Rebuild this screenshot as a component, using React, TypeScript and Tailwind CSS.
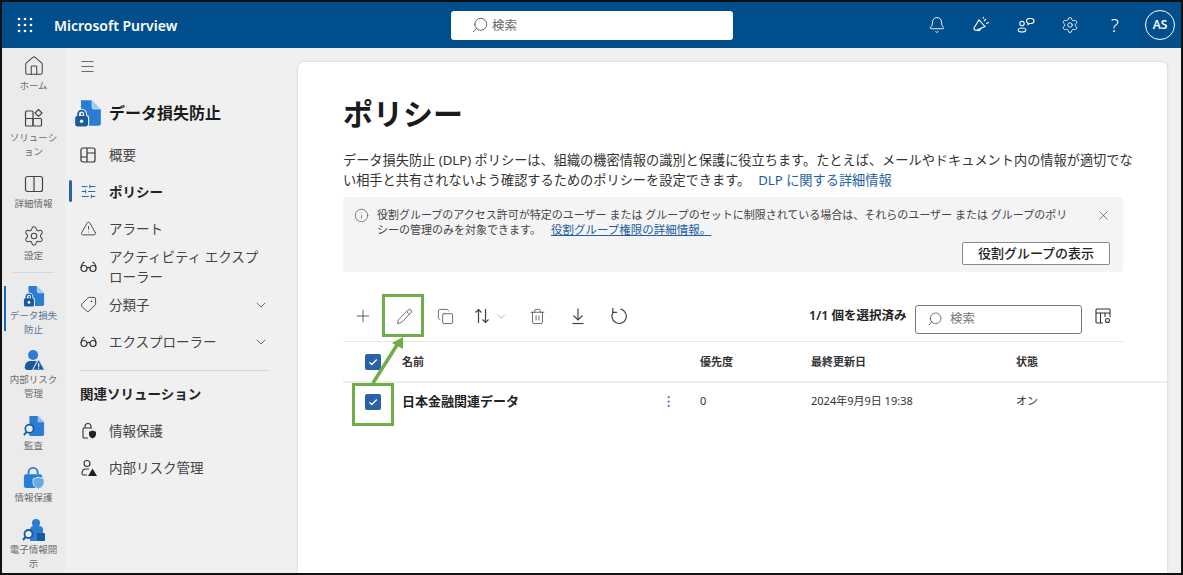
import { ReactNode } from "react"
import {
  Bell,
  ChevronDown,
  Copy,
  EllipsisVertical,
  Home,
  Info,
  Menu,
  Pencil,
  Plus,
  Search,
  Settings,
  SlidersHorizontal,
  Tag,
  Trash2,
  TriangleAlert,
  X,
} from "lucide-react"

const FONT = "font-['Noto_Sans','Noto_Sans_CJK_JP',sans-serif]"

function Waffle() {
  return (
    <svg width="16" height="16" viewBox="0 0 16 16" fill="#fff">
      {[2, 8, 14].map((y) =>
        [2, 8, 14].map((x) => <circle key={`${x}-${y}`} cx={x} cy={y} r="1.3" />)
      )}
    </svg>
  )
}

function DocLock({ size = 20 }: { size?: number }) {
  return (
    <svg width={size} height={size} viewBox="0 0 24 24">
      <path d="M6 1h9.500l7.500 7.500V21a2 2 0 0 1-2 2H6z" fill="#2b7cd3" />
      <path d="M15.500 1v6a1.500 1.500 0 0 0 1.500 1.500h6z" fill="#9cc9f2" stroke="#f0f0f0" strokeWidth="0.6" />
      <path d="M3.500 15v-2a3 3 0 0 1 6 0v2" fill="none" stroke="#f0f0f0" strokeWidth="3.400" />
      <rect x="0" y="14" width="13" height="10" rx="2" fill="#f0f0f0" />
      <path d="M3.500 15v-2a3 3 0 0 1 6 0v2" fill="none" stroke="#185a9d" strokeWidth="1.500" />
      <rect x="1" y="14.500" width="11" height="9" rx="1.800" fill="#185a9d" />
      <circle cx="6.500" cy="19" r="1.500" fill="#fff" />
    </svg>
  )
}

function PersonAlert() {
  return (
    <svg width="22" height="22" viewBox="0 0 24 24">
      <circle cx="11" cy="6.500" r="5.500" fill="#2b7cd3" />
      <path d="M2 20c0-5 3-7 7-7h6l-5 10H5a3 3 0 0 1-3-3z" fill="#185a9d" />
      <path d="M17 11.500l6.500 11.500h-13z" fill="#185a9d" stroke="#ebebeb" strokeWidth="0.8" />
      <rect x="16.400" y="15.500" width="1.300" height="4" fill="#fff" />
      <rect x="16.400" y="20.200" width="1.300" height="1.300" fill="#fff" />
    </svg>
  )
}

function DocSearch() {
  return (
    <svg width="22" height="24" viewBox="0 0 24 24">
      <path d="M7 1h9l7 7v13a2 2 0 0 1-2 2H7z" fill="#2b7cd3" />
      <path d="M16 1l7 7h-7z" fill="#8cc1f0" />
      <circle cx="7" cy="15" r="4.500" fill="#ebebeb" stroke="#185a9d" strokeWidth="1.800" />
      <path d="M3.800 18.500L1 22" stroke="#185a9d" strokeWidth="2" />
    </svg>
  )
}

function LockShield() {
  return (
    <svg width="22" height="24" viewBox="0 0 24 24">
      <path d="M6 8V6a5 5 0 0 1 10 0v2" fill="none" stroke="#2b7cd3" strokeWidth="2" />
      <rect x="1" y="8" width="20" height="15" rx="2.500" fill="#2b7cd3" />
      <path d="M17 11l6 2v4.500c0 3-3 5-6 6.500-3-1.500-6-3.500-6-6.500V13z" fill="#6aa9e4" stroke="#ebebeb" />
    </svg>
  )
}

function Discovery() {
  return (
    <svg width="24" height="24" viewBox="0 0 24 24">
      <circle cx="14" cy="5" r="4" fill="#2b7cd3" />
      <path d="M8 12a4 4 0 0 1 4-4h5a4 4 0 0 1 4 4v11H8z" fill="#2b7cd3" />
      <circle cx="6.500" cy="16" r="4" fill="#ebebeb" stroke="#185a9d" strokeWidth="1.800" />
      <path d="M3.500 19L1 22" stroke="#185a9d" strokeWidth="2" />
      <rect x="15" y="15" width="8" height="8" rx="1" fill="#185a9d" />
    </svg>
  )
}

function SolutionsIcon() {
  return (
    <svg width="20" height="20" viewBox="0 0 20 20" fill="none" stroke="#444" strokeWidth="1.200">
      <rect x="1.500" y="3" width="7.500" height="7.500" rx="1" />
      <rect x="1.500" y="10.500" width="7.500" height="7.500" rx="1" />
      <rect x="9" y="10.500" width="8.500" height="7.500" rx="1" />
      <path d="M14.500 1.500l3.500 3.500-3.500 3.500-3.500-3.500z" />
    </svg>
  )
}

function BookIcon() {
  return (
    <svg width="20" height="20" viewBox="0 0 20 20" fill="none" stroke="#444" strokeWidth="1.200">
      <rect x="1.500" y="2.500" width="17" height="15" rx="2" />
      <path d="M10 2.500v15" />
    </svg>
  )
}

function OverviewIcon() {
  return (
    <svg width="16" height="16" viewBox="0 0 16 16" fill="none" stroke="#333" strokeWidth="1.200">
      <rect x="1" y="1" width="14" height="14" rx="2" />
      <path d="M7 1v14M7 6h8M1 10h6" />
    </svg>
  )
}

function GlassesIcon() {
  return (
    <svg width="17" height="17" viewBox="0 0 17 17" fill="none" stroke="#333" strokeWidth="1.200">
      <circle cx="4" cy="10.500" r="3" />
      <circle cx="13" cy="10.500" r="3" />
      <path d="M7 10c1-.8 2-.8 3 0" />
      <path d="M1 10c.3-3 1.500-5 3.500-6M16 10c-.3-3-1.500-5-3.500-6" />
    </svg>
  )
}

function LockShieldLine() {
  return (
    <svg width="18" height="18" viewBox="0 0 18 18">
      <path d="M5 6V4.500a3 3 0 0 1 6 0V6" fill="none" stroke="#333" strokeWidth="1.100" />
      <path d="M8 16H4a1 1 0 0 1-1-1V7a1 1 0 0 1 1-1h8" fill="none" stroke="#333" strokeWidth="1.100" />
      <path d="M12.500 8.500l3.500 1.200v2.800c0 2-1.700 3.200-3.500 3.900-1.800-.7-3.500-1.900-3.500-3.900V9.700z" fill="#222" />
    </svg>
  )
}

function PersonAlertLine() {
  return (
    <svg width="18" height="18" viewBox="0 0 18 18">
      <circle cx="7" cy="4.500" r="3" fill="none" stroke="#333" strokeWidth="1.100" />
      <path d="M7 16H3.500A1.500 1.500 0 0 1 2 14.500C2 11.500 4 10 6 10h3" fill="none" stroke="#333" strokeWidth="1.100" />
      <path d="M12.500 9.500l4.500 7.500H8z" fill="#222" />
    </svg>
  )
}

function Megaphone() {
  return (
    <svg width="18" height="18" viewBox="0 0 18 18" fill="none" stroke="#fff" strokeWidth="1.100">
      <path d="M2 12L7 4l6 6.500-8 3.500a2 2 0 0 1-3-2z" />
      <path d="M5 14a2 2 0 0 0 3.500-1.500" />
      <path d="M12 5l2-2M14 7.500l3-1M11 2.500l.5-1.500" />
    </svg>
  )
}

function CommunityIcon() {
  return (
    <svg width="18" height="18" viewBox="0 0 18 18" fill="none" stroke="#fff" strokeWidth="1.100">
      <circle cx="5" cy="7.500" r="2.200" />
      <ellipse cx="5" cy="14" rx="3.800" ry="2" />
      <path d="M9.500 5a3 2.500 0 0 1 3-2.500h1.500a3 2.500 0 0 1 0 5h-1.500l-1.500 1v-1.300A2.500 2.500 0 0 1 9.500 5z" />
    </svg>
  )
}

function TableSettings() {
  return (
    <svg width="16" height="16" viewBox="0 0 16 16" fill="none" stroke="#333" strokeWidth="1.100">
      <path d="M8 15H2a1 1 0 0 1-1-1V2a1 1 0 0 1 1-1h12a1 1 0 0 1 1 1v7" />
      <path d="M1 5h14M5.500 5v10M10 5v4" />
      <circle cx="12.500" cy="12.500" r="2" />
    </svg>
  )
}

function Updown() {
  return (
    <svg width="16" height="16" viewBox="0 0 16 16" fill="none" stroke="#444" strokeWidth="1.200">
      <path d="M4.500 15V1.500M1.500 4.500l3-3 3 3" />
      <path d="M11.500 1v13.500M8.500 11.500l3 3 3-3" />
    </svg>
  )
}

function DownloadIcon() {
  return (
    <svg width="18" height="18" viewBox="0 0 18 18" fill="none" stroke="#444" strokeWidth="1.200">
      <path d="M9 1.500v11.500M4.500 8.500L9 13l4.500-4.500" />
      <path d="M3.500 16.500h11" />
    </svg>
  )
}

function RefreshIcon() {
  return (
    <svg width="18" height="18" viewBox="0 0 18 18" fill="none" stroke="#444" strokeWidth="1.200">
      <path d="M10.500 2.200A7.200 7.200 0 1 1 3.500 4.800" />
      <path d="M2.800 1v4.300h4.300" />
    </svg>
  )
}

function Check() {
  return (
    <span className="flex h-4 w-4 items-center justify-center rounded-[2px] bg-[#2a62a8]">
      <svg width="10" height="10" viewBox="0 0 10 10" fill="none" stroke="#fff" strokeWidth="1.300">
        <path d="M1.500 5.300l2.300 2.200 5-5" />
      </svg>
    </span>
  )
}

function RailItem({ icon, lines, active, className = "" }: { icon: ReactNode; lines: string[]; active?: boolean; className?: string }) {
  return (
    <div className={`relative flex w-full flex-col items-center ${className}`}>
      {active && <span className="absolute left-[2px] top-0 h-[45px] w-[2px] bg-[#0f6cbd]" />}
      <div className="flex h-5 items-center justify-center">{icon}</div>
      <div className={`mt-[3px] text-center text-[9.500px] leading-[14px] ${active ? "text-[#5a7595]" : "text-[#6b6b6b]"}`}>
        {lines.map((l) => (
          <div key={l}>{l}</div>
        ))}
      </div>
    </div>
  )
}

function NavItem({
  icon,
  children,
  chevron,
  active,
  className = "h-[37px]",
}: {
  icon: ReactNode
  children: ReactNode
  chevron?: boolean
  active?: boolean
  className?: string
}) {
  return (
    <div className={`relative flex items-center pl-[15px] pr-[29px] ${className}`}>
      {active && <span className="absolute left-[4px] top-[7px] h-[22px] w-[3px] rounded-sm bg-[#2a62a8]" />}
      <div className="flex w-[29px] shrink-0 items-center">{icon}</div>
      <div className={`flex-1 text-[13.500px] leading-[20px] ${active ? "font-bold text-[#222]" : "text-[#444]"}`}>{children}</div>
      {chevron && <ChevronDown size={16} strokeWidth={1.2} className="text-[#444]" />}
    </div>
  )
}

export default function App() {
  return (
    <div className={`${FONT} flex h-[575px] w-[1183px] flex-col overflow-hidden border-2 border-[#111] bg-[#f0f0f0]`}>
      <header className="flex h-[46px] shrink-0 items-center bg-[#004e8c] text-white">
        <div className="ml-[15px] flex w-[37px] shrink-0"><Waffle /></div>
        <div className="w-[397px] shrink-0 text-[14px] font-semibold">Microsoft Purview</div>
        <div className="flex h-[29px] w-[282px] shrink-0 items-center gap-[3px] rounded-[3px] bg-white pl-[20px] text-[12.5px] text-[#666]">
          <Search size={18} strokeWidth={1} className="-scale-x-100 text-[#333]" />
          <span className="pt-[2px]">検索</span>
        </div>
        <div className="flex flex-1 items-center justify-end pr-[6px]">
          <div className="flex w-[44.5px] justify-center"><Bell size={18} strokeWidth={1.2} /></div>
          <div className="flex w-[44.5px] justify-center"><Megaphone /></div>
          <div className="flex w-[44.5px] justify-center"><CommunityIcon /></div>
          <div className="flex w-[44.5px] justify-center"><Settings size={18} strokeWidth={1.2} /></div>
          <div className="flex w-[44.5px] justify-center text-[19px] font-light leading-none">?</div>
          <div className="ml-[8px] flex h-[30px] w-[30px] items-center justify-center rounded-full border border-white text-[12px] font-semibold">AS</div>
        </div>
      </header>

      <div className="flex min-h-0 flex-1">
        <aside className="flex w-[63px] shrink-0 flex-col items-center gap-[15px] bg-[#ebebeb] pt-[8px]">
          <RailItem icon={<Home size={22} strokeWidth={1.1} className="text-[#444]" />} lines={["ホーム"]} />
          <RailItem icon={<SolutionsIcon />} lines={["ソリューシ", "ョン"]} />
          <RailItem icon={<BookIcon />} lines={["詳細情報"]} />
          <RailItem icon={<Settings size={22} strokeWidth={1.1} className="text-[#444]" />} lines={["設定"]} />
          <div className="-mb-[2px] -mt-[6px] h-px w-[41px] shrink-0 bg-[#d6d6d6]" />
          <RailItem active icon={<DocLock size={22} />} lines={["データ損失", "防止"]} className="-mb-[2px]" />
          <RailItem icon={<PersonAlert />} lines={["内部リスク", "管理"]} />
          <RailItem icon={<DocSearch />} lines={["監査"]} />
          <RailItem icon={<LockShield />} lines={["情報保護"]} />
          <RailItem icon={<Discovery />} lines={["電子情報開", "示"]} />
        </aside>

        <nav className="w-[233px] shrink-0 pt-[10px]">
          <div className="pl-[14px]"><Menu size={17} strokeWidth={1} className="text-[#333]" /></div>
          <div className="mt-[24px] flex items-center pl-[9px]">
            <div className="w-[35px] shrink-0"><DocLock size={28} /></div>
            <div className="text-[16px] font-bold text-[#1b1b1b]">データ損失防止</div>
          </div>
          <div className="mt-[9px]">
            <NavItem icon={<OverviewIcon />}>概要</NavItem>
            <NavItem active icon={<SlidersHorizontal size={17} strokeWidth={1.4} className="text-[#2a62a8]" />}>ポリシー</NavItem>
            <NavItem icon={<TriangleAlert size={17} strokeWidth={1.2} className="text-[#333]" />}>アラート</NavItem>
            <NavItem className="h-[39px]" icon={<GlassesIcon />}>アクティビティ エクスプローラー</NavItem>
            <NavItem chevron icon={<Tag size={17} strokeWidth={1.2} className="-scale-x-100 text-[#333]" />}>分類子</NavItem>
            <NavItem chevron icon={<GlassesIcon />}>エクスプローラー</NavItem>
          </div>
          <div className="ml-[15px] mr-[29px] mt-[10px] h-px bg-[#d6d6d6]" />
          <div className="ml-[15px] mt-[13px] text-[13.5px] font-semibold leading-[20px] text-[#222]">関連ソリューション</div>
          <div className="mt-[8px]">
            <NavItem icon={<LockShieldLine />}>情報保護</NavItem>
            <NavItem icon={<PersonAlertLine />}>内部リスク管理</NavItem>
          </div>
        </nav>

        <main className="mr-[14px] mt-[14px] flex-1 rounded-t-[6px] bg-white pl-[45px] shadow-[0_0_3px_rgba(0,0,0,0.15)]">
          <div className="w-[780px]">
            <h1 className="mt-[33px] text-[30px] font-bold leading-[38px] text-[#1b1b1b]">ポリシー</h1>
            <p className="mt-[17px] w-[793px] text-[13.2px] leading-[20px] text-[#333]">
              データ損失防止 (DLP) ポリシーは、組織の機密情報の識別と保護に役立ちます。たとえば、メールやドキュメント内の情報が適切でない相手と共有されないよう確認するためのポリシーを設定できます。
              <span className="ml-2 text-[#1f5f9e]">DLP に関する詳細情報</span>
            </p>
            <div className="mt-[7px] h-[75px] rounded-[3px] bg-[#f4f4f4] pl-[11px] pr-[12px] pt-[10px]">
              <div className="flex">
                <Info size={15} strokeWidth={1} className="mt-[1px] shrink-0 text-[#444]" />
                <div className="ml-[8px] flex-1 text-[11px] leading-[15px] text-[#444]">
                  役割グループのアクセス許可が特定のユーザー または グループのセットに制限されている場合は、それらのユーザー または グループのポリシーの管理のみを対象できます。
                  <span className="ml-[10px] text-[11.5px] text-[#1f5f9e] underline">役割グループ権限の詳細情報。</span>
                </div>
                <X size={15} strokeWidth={1} className="ml-[20px] mt-[1px] shrink-0 text-[#444]" />
              </div>
              <div className="mt-[5px] flex justify-end">
                <div className="mr-[1px] flex h-[23px] w-[148px] items-center justify-center rounded-[2px] border border-[#8a8a8a] bg-white text-[13px] font-medium text-[#222]">
                  役割グループの表示
                </div>
              </div>
            </div>

            <div className="flex h-[70px] items-center border-b border-[#e6e6e6] pt-[19px] text-[#444]">
              <div className="w-[41px] pl-[10px]"><Plus size={20} strokeWidth={1} /></div>
              <div className="w-[53px] pl-[12px]"><Pencil size={17} strokeWidth={1.1} /></div>
              <div className="w-[37px]"><Copy size={17} strokeWidth={1.1} /></div>
              <div className="flex w-[55px] items-center">
                <Updown />
                <ChevronDown size={13} strokeWidth={1} className="ml-[5px] text-[#777]" />
              </div>
              <div className="w-[40px]"><Trash2 size={17} strokeWidth={1.1} /></div>
              <div className="w-[41px]"><DownloadIcon /></div>
              <div className="w-[199px]"><RefreshIcon /></div>
              <div className="w-[106px] shrink-0 whitespace-nowrap text-[12.5px] font-semibold text-[#222]">1/1 個を選択済み</div>
              <div className="mt-[6px] flex h-[29px] w-[167px] shrink-0 items-center gap-[7px] rounded-[3px] border border-[#777] pl-[11px] text-[12.5px] text-[#777]">
                <Search size={16} strokeWidth={1} className="-scale-x-100 text-[#333]" />
                検索
              </div>
              <div className="ml-[13px]"><TableSettings /></div>
            </div>
          </div>

          <div className="flex h-[41px] w-[824px] items-center border-b-2 border-[#eeeeee] pl-[22px] pt-[1px] text-[11px] font-semibold text-[#333]">
            <div className="w-[37px] shrink-0"><Check /></div>
            <div className="w-[298px]">名前</div>
            <div className="w-[111px]">優先度</div>
            <div className="w-[205px]">最終更新日</div>
            <div>状態</div>
          </div>
          <div className="relative flex h-[37px] w-[824px] items-center pl-[22px] text-[11px] text-[#333]">
            <div className="w-[37px] shrink-0"><Check /></div>
            <div className="w-[259px] text-[13px] font-bold text-[#222]">日本金融関連データ</div>
            <div className="w-[39px]"><EllipsisVertical size={15} strokeWidth={1.4} className="text-[#2a62a8]" /></div>
            <div className="w-[111px]">0</div>
            <div className="w-[205px]">2024年9月9日 19:38</div>
            <div>オン</div>

            {/* green callouts from the annotated screenshot */}
            <span className="absolute left-[9px] top-0 h-[43px] w-[42px] border-[3.5px] border-[#70ad47]" />
            <span className="absolute left-[39px] top-[-89px] h-[43px] w-[42px] border-[3.5px] border-[#70ad47]" />
            <svg className="absolute left-[20px] top-[-53px]" width="50" height="56" viewBox="0 0 50 56">
              <path d="M10 53L34 15" stroke="#70ad47" strokeWidth="3.5" />
              <path d="M40 7L29 13l11 6z" fill="#70ad47" />
            </svg>
          </div>
        </main>
      </div>
    </div>
  )
}
